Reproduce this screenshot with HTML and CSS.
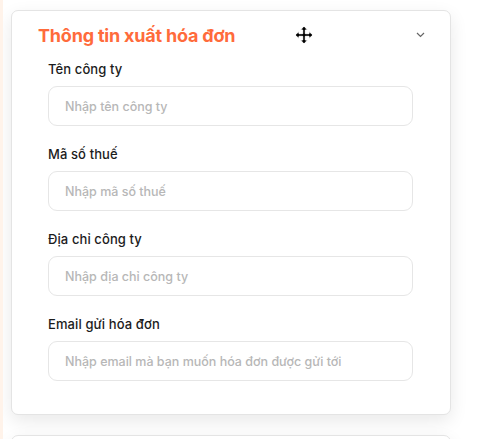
FILE: index.html
```html
<!DOCTYPE html>
<html lang="vi">
<head>
    <meta charset="UTF-8">
    <meta name="viewport" content="width=device-width, initial-scale=1.0">
    <title>Thông tin xuất hóa đơn</title>
    <link rel="stylesheet" href="styles.css">
</head>
<body>
    <div class="page">
        <section class="card">
            <div class="card-head">
                <h2>Thông tin xuất hóa đơn</h2>
                <svg class="chevron" width="9" height="6" viewBox="0 0 9 6">
                    <path d="M1 1 L4.5 4.5 L8 1" fill="none" stroke="#666" stroke-width="1.2"/>
                </svg>
            </div>

            <form class="fields">
                <div class="field">
                    <label>Tên công ty</label>
                    <input type="text" placeholder="Nhập tên công ty">
                </div>
                <div class="field">
                    <label>Mã số thuế</label>
                    <input type="text" placeholder="Nhập mã số thuế">
                </div>
                <div class="field">
                    <label>Địa chỉ công ty</label>
                    <input type="text" placeholder="Nhập địa chỉ công ty">
                </div>
                <div class="field">
                    <label>Email gửi hóa đơn</label>
                    <input type="text" placeholder="Nhập email mà bạn muốn hóa đơn được gửi tới">
                </div>
            </form>

            <!-- move cursor captured in the screenshot -->
            <svg class="cursor" width="20" height="20" viewBox="0 0 20 20">
                <path d="M10 1 L13.5 5 L11.3 5 L11.3 8.7 L15 8.7 L15 6.5 L19 10 L15 13.5 L15 11.3 L11.3 11.3 L11.3 15 L13.5 15 L10 19 L6.5 15 L8.7 15 L8.7 11.3 L5 11.3 L5 13.5 L1 10 L5 6.5 L5 8.7 L8.7 8.7 L8.7 5 L6.5 5 Z" fill="#000" stroke="#fff" stroke-width="1"/>
            </svg>
        </section>

        <section class="card next"></section>
    </div>
</body>
</html>
```

FILE: styles.css
```css
body {
    margin: 0;
    padding: 0;
    background: #fff;
    font-family: Inter, "Noto Sans", sans-serif;
    color: #1f1f1f;
}
.page {
    border-left: 3px solid #fff3ea;
    padding: 10px 0 0 8px;
    box-sizing: border-box;
    overflow: hidden;
    height: 439px;
}
.card {
    position: relative;
    width: 440px;
    box-sizing: border-box;
    background: #fff;
    border: 1px solid #e4e4e4;
    border-radius: 7px;
    box-shadow: 0 6px 18px rgba(0, 0, 0, 0.09);
    padding: 0 37px 33px 36px;
}
.card-head {
    display: flex;
    align-items: center;
    justify-content: space-between;
    height: 48px;
    margin-left: -10px;
    margin-right: -12px;
}
.card-head h2 {
    margin: 0;
    color: #ff6b3b;
    font-size: 18px;
    font-weight: 700;
    letter-spacing: -0.2px;
}
.fields {
    display: flex;
    flex-direction: column;
    gap: 18px;
}
.field label {
    display: block;
    font-size: 13px;
    line-height: 20px;
    font-weight: 500;
    color: #1c1c1c;
    margin-bottom: 7px;
    letter-spacing: 0.1px;
}
.field input {
    display: block;
    width: 100%;
    height: 40px;
    box-sizing: border-box;
    border: 1px solid #e6e6e6;
    border-radius: 9px;
    padding: 0 16px;
    font-family: inherit;
    font-size: 12.5px;
    font-weight: 500;
    outline: none;
}
.field input::placeholder {
    color: #b7b7b7;
}
.cursor {
    position: absolute;
    left: 282px;
    top: 14px;
}
.card.next {
    margin-top: 20px;
    height: 40px;
    padding: 0;
}
```
